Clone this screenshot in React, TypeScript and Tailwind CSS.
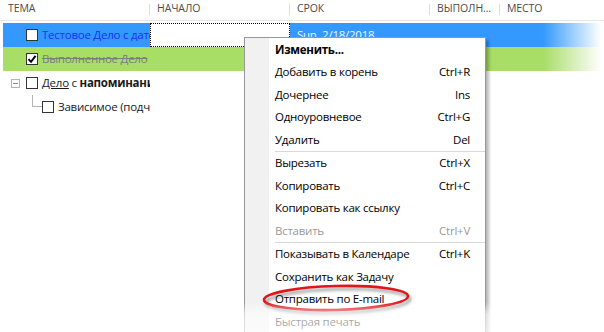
import type { ReactNode } from 'react';

type MenuEntry =
  | { kind: 'item'; label: string; shortcut?: string; bold?: boolean; disabled?: boolean }
  | { kind: 'sep' };

const menu: MenuEntry[] = [
  { kind: 'item', label: 'Изменить...', bold: true },
  { kind: 'item', label: 'Добавить в корень', shortcut: 'Ctrl+R' },
  { kind: 'item', label: 'Дочернее', shortcut: 'Ins' },
  { kind: 'item', label: 'Одноуровневое', shortcut: 'Ctrl+G' },
  { kind: 'item', label: 'Удалить', shortcut: 'Del' },
  { kind: 'sep' },
  { kind: 'item', label: 'Вырезать', shortcut: 'Ctrl+X' },
  { kind: 'item', label: 'Копировать', shortcut: 'Ctrl+C' },
  { kind: 'item', label: 'Копировать как ссылку' },
  { kind: 'item', label: 'Вставить', shortcut: 'Ctrl+V', disabled: true },
  { kind: 'sep' },
  { kind: 'item', label: 'Показывать в Календаре', shortcut: 'Ctrl+K' },
  { kind: 'item', label: 'Сохранить как Задачу' },
  { kind: 'item', label: 'Отправить по E-mail' },
  { kind: 'item', label: 'Быстрая печать' },
];

function Checkbox({ checked }: { checked?: boolean }) {
  return (
    <span className="relative flex h-[12px] w-[12px] shrink-0 items-center justify-center border border-[#333] bg-white">
      {checked && (
        <svg width="10" height="10" viewBox="0 0 10 10" className="absolute">
          <path d="M1.5 5.2 L4 7.8 L8.6 1.8" fill="none" stroke="#000" strokeWidth="1.9" />
        </svg>
      )}
    </span>
  );
}

function HeaderCell({ w, children, last }: { w?: string; children: ReactNode; last?: boolean }) {
  return (
    <div className={`flex items-center ${w ?? 'flex-1'}`}>
      <span className="flex-1 truncate pl-[7px]">{children}</span>
      {!last && <span className="h-[11px] w-px bg-[#dcdcdc]" />}
    </div>
  );
}

export default function App() {
  return (
    <div className="relative h-[332px] w-[604px] overflow-hidden bg-white font-['Open_Sans',sans-serif] text-[11.5px] tracking-[-0.25px] text-[#1a1a1a]">
      {/* column header */}
      <div className="flex h-[21px] items-center border-b border-[#e6e6e6] pb-[2px] text-[10.5px] tracking-[-0.1px] text-[#4a4a4a]">
        <div className="flex w-[150px] items-center">
          <span className="flex-1 pl-[8px]">ТЕМА</span>
          <span className="h-[11px] w-px bg-[#dcdcdc]" />
        </div>
        <HeaderCell w="w-[140px]">НАЧАЛО</HeaderCell>
        <HeaderCell w="w-[140px]">СРОК</HeaderCell>
        <HeaderCell w="w-[70px]">ВЫПОЛН...</HeaderCell>
        <HeaderCell last>МЕСТО</HeaderCell>
      </div>

      <div className="mt-[2px] flex flex-col">
        {/* row 1: selected */}
        <div className="ml-[3px] flex h-[24px] items-center bg-[linear-gradient(to_right,#3399ff_0px,#3399ff_540px,#ffffff_598px)]">
          <div className="flex w-[147px] items-center gap-[4px] overflow-hidden whitespace-nowrap pl-[23px]">
            <Checkbox />
            <span className="text-[#1730ff]">Тестовое Дело с датой</span>
          </div>
          <div className="h-full w-[140px] border border-dotted border-black bg-white" />
          <span className="pl-[7px] text-[#eef6ff]">Sun, 2/18/2018</span>
        </div>

        {/* row 2: done */}
        <div className="ml-[3px] flex h-[24px] items-center bg-[linear-gradient(to_right,#a8dd66_0px,#a8dd66_540px,#ffffff_598px)]">
          <div className="flex w-[147px] items-center gap-[4px] overflow-hidden whitespace-nowrap pl-[23px]">
            <Checkbox checked />
            <span className="text-[#7d7d7d] line-through">Выполненное Дело</span>
          </div>
        </div>

        {/* row 3: parent */}
        <div className="ml-[3px] flex h-[24px] items-center">
          <div className="flex w-[147px] items-center overflow-hidden whitespace-nowrap pl-[8px]">
            <span className="relative flex h-[9px] w-[9px] shrink-0 items-center justify-center border border-[#b4b4b4] bg-white">
              <span className="h-px w-[5px] bg-[#8a8a8a]" />
            </span>
            <span className="ml-[6px]">
              <Checkbox />
            </span>
            <span className="ml-[4px]">
              <span className="underline">Дело</span> с <span className="font-bold">напоминанием</span>
            </span>
          </div>
        </div>

        {/* row 4: child */}
        <div className="ml-[3px] flex h-[24px] items-center">
          <div className="flex h-full w-[147px] items-center overflow-hidden whitespace-nowrap">
            <span className="ml-[29px] mt-[-7px] h-[19px] w-[10px] shrink-0 self-start border-b border-l border-[#b4b4b4]" />
            <Checkbox />
            <span className="ml-[4px]">Зависимое (подчинённое)</span>
          </div>
        </div>
      </div>

      {/* context menu */}
      <div className="absolute left-[244px] top-[37px] w-[242px] border border-[#979797] bg-[linear-gradient(to_right,#f1f1f1_0px,#f1f1f1_24px,#ffffff_24px)] shadow-[3px_3px_3px_rgba(0,0,0,0.28)]">
        {menu.map((m, i) =>
          m.kind === 'sep' ? (
            <div key={i} className="ml-[30px] h-px bg-[#d9d9d9]" />
          ) : (
            <div
              key={i}
              className={`flex h-[22.5px] items-center justify-between pl-[30px] pr-[15px] ${
                m.disabled ? 'text-[#9a9a9a]' : 'text-black'
              } ${m.bold ? 'font-bold' : ''}`}
            >
              <span>{m.label}</span>
              {m.shortcut && <span>{m.shortcut}</span>}
            </div>
          ),
        )}
      </div>

      {/* hand-drawn red circle */}
      <svg className="absolute left-[255px] top-[278px]" width="170" height="44" viewBox="0 0 170 44">
        <defs>
          <filter id="blur" x="-10%" y="-30%" width="120%" height="160%">
            <feGaussianBlur stdDeviation="1.6" />
          </filter>
        </defs>
        <ellipse cx="83" cy="23" rx="72" ry="12" transform="rotate(-1.5 83 23)" fill="none" stroke="rgba(0,0,0,0.35)" strokeWidth="3" filter="url(#blur)" />
        <ellipse cx="81" cy="20" rx="72" ry="12" transform="rotate(-1.5 81 20)" fill="none" stroke="#e3151a" strokeWidth="2.6" />
      </svg>

      {/* fade out at the bottom */}
      <div className="absolute inset-x-0 bottom-0 h-[30px] bg-[linear-gradient(to_bottom,rgba(255,255,255,0)_0%,rgba(255,255,255,0.6)_40%,rgba(255,255,255,0.7)_100%)]" />
    </div>
  );
}
